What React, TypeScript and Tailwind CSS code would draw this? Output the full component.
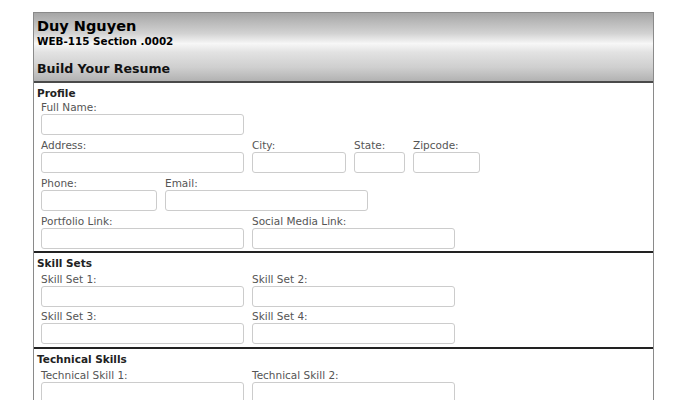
import React from "react";

const font = { fontFamily: '"DejaVu Sans", Verdana, sans-serif' };

function Field({ label, w, mb = "" }: { label: string; w: string; mb?: string }) {
  return (
    <div className={`flex flex-col ${mb}`}>
      <label className="h-[16px] text-[10.5px] leading-[14px] pt-[2px] text-[#555] whitespace-nowrap">{label}</label>
      <input className={`h-[21px] ${w} border border-[#ccc] rounded-[3px] bg-white outline-none`} />
    </div>
  );
}

export default function App() {
  return (
    <div className="w-[700px] h-[400px] bg-white overflow-hidden" style={font}>
      <div className="ml-[33px] mt-[12px] w-[621px] border-l border-r border-t border-[#8a8a8a]">
        <div className="h-[70px] border-b-2 border-[#4a4a4a] pl-[3px] bg-[linear-gradient(to_bottom,#a6a6a6_0%,#d2d2d2_30%,#f7f7f7_45%,#e2e2e2_58%,#cfcfcf_80%,#b2b2b2_100%)]">
          <div className="text-[14.5px] font-bold leading-[18px] pt-[4px] text-black">Duy Nguyen</div>
          <div className="text-[10.4px] font-bold leading-[12px] text-black">WEB-115 Section .0002</div>
          <div className="text-[12.6px] font-bold leading-[16px] mt-[14px] text-[#111]">Build Your Resume</div>
        </div>

        <div className="pl-[3px] pt-[2px] pb-[2px] border-b-2 border-[#222]">
          <div className="text-[10.5px] font-bold leading-[14px] pt-px h-[14px] text-[#222]">Profile</div>
          <div className="pl-[4px] -mt-px">
            <Field label="Full Name:" w="w-[203px]" mb="mb-px" />
            <div className="flex gap-[8px] mb-px">
              <Field label="Address:" w="w-[203px]" />
              <Field label="City:" w="w-[94px]" />
              <Field label="State:" w="w-[51px]" />
              <Field label="Zipcode:" w="w-[67px]" />
            </div>
            <div className="flex gap-[8px] mb-px">
              <Field label="Phone:" w="w-[116px]" />
              <Field label="Email:" w="w-[203px]" />
            </div>
            <div className="flex gap-[8px]">
              <Field label="Portfolio Link:" w="w-[203px]" />
              <Field label="Social Media Link:" w="w-[203px]" />
            </div>
          </div>
        </div>

        <div className="pl-[3px] pt-[3px] pb-[3px] border-b-2 border-[#222]">
          <div className="text-[10.5px] font-bold leading-[14px] text-[#222]">Skill Sets</div>
          <div className="pl-[4px]">
            <div className="flex gap-[8px]">
              <Field label="Skill Set 1:" w="w-[203px]" />
              <Field label="Skill Set 2:" w="w-[203px]" />
            </div>
            <div className="flex gap-[8px]">
              <Field label="Skill Set 3:" w="w-[203px]" />
              <Field label="Skill Set 4:" w="w-[203px]" />
            </div>
          </div>
        </div>

        <div className="pl-[3px] pt-[3px] pb-[3px]">
          <div className="text-[10.5px] font-bold leading-[14px] text-[#222]">Technical Skills</div>
          <div className="pl-[4px]">
            <div className="flex gap-[8px]">
              <Field label="Technical Skill 1:" w="w-[203px]" />
              <Field label="Technical Skill 2:" w="w-[203px]" />
            </div>
          </div>
        </div>
      </div>
    </div>
  );
}
